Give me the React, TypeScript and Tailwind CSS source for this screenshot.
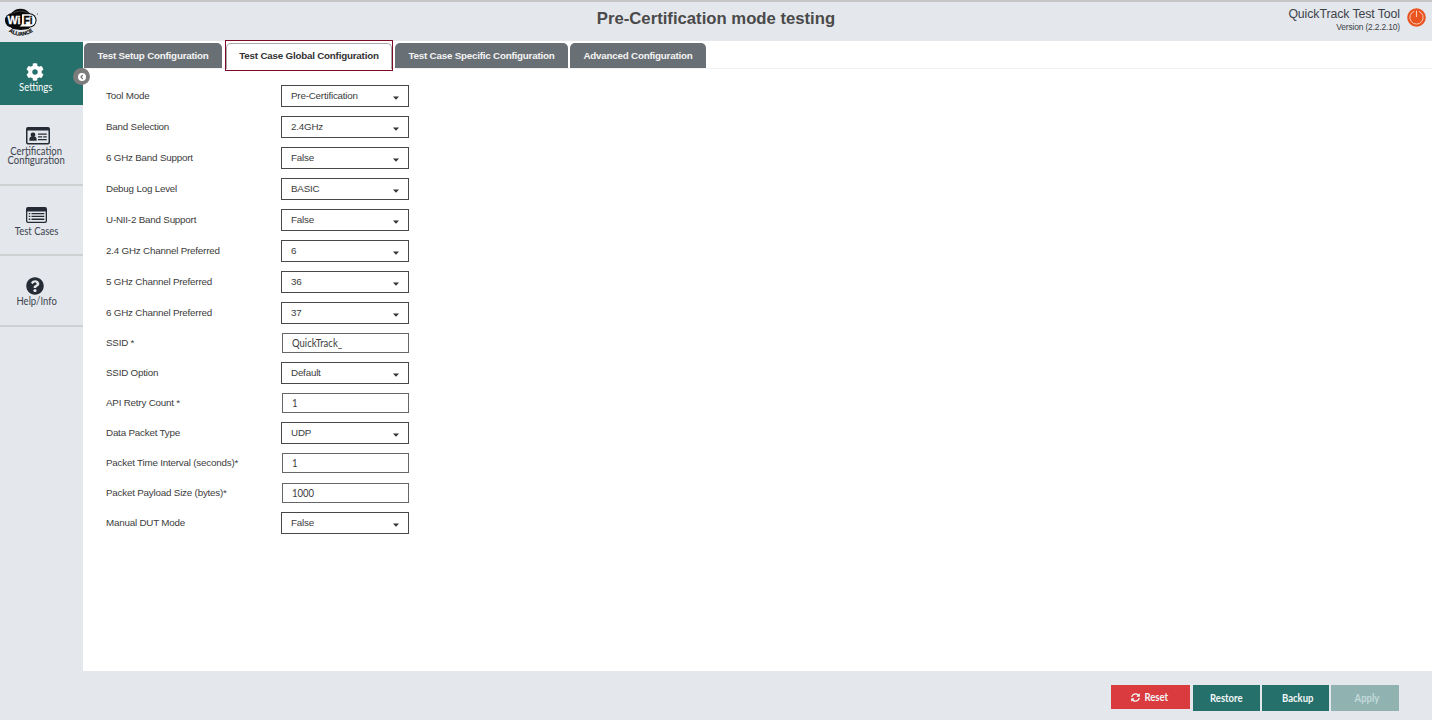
import React from 'react';
import { FaCog, FaQuestionCircle, FaSyncAlt } from 'react-icons/fa';

type Field = { label: string; value: string; kind: 'select' | 'input'; row: string };

const tall = 'h-[31px]';
const short = 'h-[30px]';

const fields: Field[] = [
  { label: 'Tool Mode', value: 'Pre-Certification', kind: 'select', row: tall },
  { label: 'Band Selection', value: '2.4GHz', kind: 'select', row: tall },
  { label: '6 GHz Band Support', value: 'False', kind: 'select', row: tall },
  { label: 'Debug Log Level', value: 'BASIC', kind: 'select', row: tall },
  { label: 'U-NII-2 Band Support', value: 'False', kind: 'select', row: tall },
  { label: '2.4 GHz Channel Preferred', value: '6', kind: 'select', row: tall },
  { label: '5 GHz Channel Preferred', value: '36', kind: 'select', row: tall },
  { label: '6 GHz Channel Preferred', value: '37', kind: 'select', row: short },
  { label: 'SSID *', value: 'QuickTrack_', kind: 'input', row: short },
  { label: 'SSID Option', value: 'Default', kind: 'select', row: short },
  { label: 'API Retry Count *', value: '1', kind: 'input', row: short },
  { label: 'Data Packet Type', value: 'UDP', kind: 'select', row: short },
  { label: 'Packet Time Interval (seconds)*', value: '1', kind: 'input', row: short },
  { label: 'Packet Payload Size (bytes)*', value: '1000', kind: 'input', row: short },
  { label: 'Manual DUT Mode', value: 'False', kind: 'select', row: short },
];

function WifiLogo() {
  return (
    <svg width="36" height="30" viewBox="0 0 36 30" className="block">
      <circle cx="15.500" cy="12.500" r="11.700" fill="#0b0b0b" />
      <path d="M0 18.500Q15.500 25.500 32 18.500V30H0z" fill="#e4e7ec" />
      <path d="M6 6.500Q15.500-.5 25 6.500" fill="none" stroke="#666" strokeWidth=".6" />
      <rect x="0" y="5.200" width="31.500" height="14.300" rx="7" fill="#0b0b0b" />
      <path d="M17 6.300h7.500a6 6 0 0 1 0 12.100H14.500q2.500-1 2.500-4z" fill="#fff" />
      <text x="2.600" y="16.300" fontSize="11.500" fontWeight="bold" fill="#fff" stroke="#fff" strokeWidth=".3" textLength="13" lengthAdjust="spacingAndGlyphs">Wi</text>
      <text x="18.600" y="16.300" fontSize="11.500" fontWeight="bold" fill="#0b0b0b" stroke="#0b0b0b" strokeWidth=".4" textLength="9" lengthAdjust="spacingAndGlyphs">Fi</text>
      <path id="alliance-curve" d="M3.800 23.500Q15.500 31.800 28 23.500" fill="none" />
      <text fontSize="5.200" fontWeight="bold" fill="#0b0b0b" stroke="#0b0b0b" strokeWidth=".2">
        <textPath href="#alliance-curve" textLength="26" lengthAdjust="spacingAndGlyphs">ALLIANCE</textPath>
      </text>
      <circle cx="32.500" cy="6" r=".7" fill="#777" />
    </svg>
  );
}

function CardIcon() {
  return (
    <svg width="24" height="18" viewBox="0 0 24 18" className="ml-[2px] block">
      <path fillRule="evenodd" d="M2 0h20a2 2 0 0 1 2 2v13.500a2 2 0 0 1-2 2H2a2 2 0 0 1-2-2V2a2 2 0 0 1 2-2zM1.500 3.500v11.700q0 .8.8.8h19.400q.8 0 .8-.8V3.500z" fill="#242b35" />
      <circle cx="7" cy="7.800" r="2.400" fill="#242b35" />
      <path d="M3.300 13.800q0-4.200 2.200-4.200 1.500 1 3 0 2.200 0 2.200 4.200z" fill="#242b35" />
      <path d="M12 7.200h8.700M12 9.900h4.200M17.300 9.900h3.400M12 12.700h8.700" stroke="#242b35" strokeWidth="1.300" />
    </svg>
  );
}

function ListIcon() {
  return (
    <svg width="21" height="16" viewBox="0 0 21 16" className="block">
      <path fillRule="evenodd" d="M2 0h17a2 2 0 0 1 2 2v12a2 2 0 0 1-2 2H2a2 2 0 0 1-2-2V2a2 2 0 0 1 2-2zM1.300 4.500v9.400q0 .8.8.8h16.800q.8 0 .8-.8V4.500z" fill="#242b35" />
      <path d="M2.800 6.600h1.500M2.800 9.400h1.500M2.800 12.200h1.500M5.500 6.600h12.800M5.500 9.400h12.800M5.500 12.200h12.800" stroke="#242b35" strokeWidth="1.400" />
    </svg>
  );
}

function PowerIcon() {
  return (
    <svg width="19" height="19" viewBox="0 0 19 19" className="block">
      <circle cx="9.500" cy="9.500" r="9.300" fill="#e95420" />
      <path d="M7.200 3.300a6.600 6.600 0 1 0 4.600 0" fill="none" stroke="#f9c9b5" strokeWidth="1" />
      <path d="M9.500 2.500v6.500" stroke="#f9c9b5" strokeWidth="1.100" />
    </svg>
  );
}

function FieldRow({ label, value, kind, row }: Field) {
  return (
    <div className={`flex items-start ${row}`}>
      <div className="w-[175px] pt-[7px] leading-4 whitespace-nowrap">{label}</div>
      {kind === 'select' ? (
        <div className="mt-1 flex h-[22px] w-[128px] items-start justify-between border border-[#484848] pl-[9px] pr-[9px] pt-[2px] leading-4">
          <span>{value}</span>
          <svg width="6" height="4" viewBox="0 0 6 4" className="mt-[8px]">
            <path d="M0 .5h6L3 3.700z" fill="#333" />
          </svg>
        </div>
      ) : (
        <div className="ml-px mt-[5px] flex h-5 w-[127px] items-center border border-[#666] pl-[9px] font-['Lato',sans-serif] text-[10.700px] leading-4 tracking-normal">
          <span className="origin-left scale-x-[.89]">{value}</span>
        </div>
      )}
    </div>
  );
}

export default function App() {
  return (
    <div className="flex h-[720px] w-[1432px] flex-col overflow-hidden border-t-2 border-[#c6c6c6] bg-[#e4e7ec] font-['Liberation_Sans',sans-serif] text-[#3c3c3c]">
      <header className="grid h-[39px] shrink-0 grid-cols-[1fr_auto_1fr]">
        <div className="pl-[5px] pt-[6px]">
          <WifiLogo />
        </div>
        <h1 className="pt-[7px] text-[16.700px] leading-5 font-bold text-[#4a4a4a]">Pre-Certification mode testing</h1>
        <div className="flex justify-end gap-[7px] pr-[6px] pt-[6px]">
          <div className="text-right text-[#3d4249]">
            <div className="text-[12.300px] leading-[13px] tracking-[-0.080px]">QuickTrack Test Tool</div>
            <div className="text-[8.400px] leading-[13px] tracking-[-0.130px]">Version (2.2.2.10)</div>
          </div>
          <PowerIcon />
        </div>
      </header>

      <div className="flex min-h-0 flex-1">
        <nav className="relative w-[83px] shrink-0 pt-px font-['Lato',sans-serif] text-[10.700px] leading-[9px] text-[#3d444e]">
          <div className="flex h-[63px] flex-col items-center bg-[#26706c] pr-[11px] pt-[21px] text-white">
            <FaCog size={18} className="mr-[2px]" />
            <span className="mt-px scale-x-[.89]">Settings</span>
          </div>
          <div className="flex h-[81px] flex-col items-center border-b-2 border-[#cfd0d2] pr-[10px] pt-[22px] text-center">
            <CardIcon />
            <span className="mt-px scale-x-[.89]">Certification</span>
            <span className="scale-x-[.89]">Configuration</span>
          </div>
          <div className="flex h-[70px] flex-col items-center border-b-2 border-[#cfd0d2] pr-[10px] pt-[21px]">
            <ListIcon />
            <span className="mt-[3px] scale-x-[.89]">Test Cases</span>
          </div>
          <div className="flex h-[71px] flex-col items-center border-b-2 border-[#cfd0d2] pr-[10px] pt-[21px]">
            <FaQuestionCircle size={18} color="#242b35" className="mr-[3px]" />
            <span className="mt-px scale-x-[.89]">Help/Info</span>
          </div>
          <div className="absolute left-[73px] top-[27px] flex size-[17px] items-center justify-center rounded-full bg-[#7c7c7c]">
            <svg width="8" height="8" viewBox="0 0 8 8">
              <circle cx="4" cy="4" r="4" fill="#fff" />
              <path d="M4.800 2L2.900 4l1.900 2" fill="none" stroke="#777" strokeWidth="1.200" />
            </svg>
          </div>
        </nav>

        <main className="flex min-w-0 flex-1 flex-col">
          <div className="flex min-h-0 flex-1 flex-col bg-white">
            <div className="flex h-7 items-start border-b border-[#f2f2f2] pl-[1px] text-[9.800px] font-bold tracking-[-0.210px] text-[#f4f4f4]">
              <div className="mt-[2px] flex h-[25px] w-[138px] items-center justify-center rounded-t-[5px] bg-[#697075] pt-px">Test Setup Configuration</div>
              <div className="z-10 ml-[3px] mt-[-1px] h-[31px] w-[168px] shrink-0 border border-[#7d0a26] bg-white text-[#333]">
                <div className="mt-[2px] flex h-[26px] items-center justify-center rounded-t-[5px] border border-b-0 border-[#aaa]">Test Case Global Configuration</div>
              </div>
              <div className="ml-[2px] mt-[2px] flex h-[25px] w-[173px] items-center justify-center rounded-t-[5px] bg-[#697075] pt-px">Test Case Specific Configuration</div>
              <div className="ml-[2px] mt-[2px] flex h-[25px] w-[136px] items-center justify-center rounded-t-[5px] bg-[#697075] pt-px">Advanced Configuration</div>
            </div>
            <form className="pl-[23px] pt-3 text-[9.800px] tracking-[-0.200px]">
              {fields.map((f) => (
                <FieldRow key={f.label} {...f} />
              ))}
            </form>
          </div>
          <footer className="flex h-[49px] shrink-0 items-start justify-end gap-[2px] pr-[33px] pt-[14px] font-['Lato',sans-serif] text-[10.700px] font-bold text-[#f3f6f6]">
            <button className="flex h-6 w-[79px] items-center justify-center gap-[3px] bg-[#d93b3f]">
              <FaSyncAlt size={9} />
              <span className="scale-x-[.89]">Reset</span>
            </button>
            <button className="ml-px h-[26px] w-[67px] bg-[#26706c]">
              <span className="inline-block scale-x-[.89]">Restore</span>
            </button>
            <button className="h-[26px] w-[67px] bg-[#26706c] pl-1">
              <span className="inline-block scale-x-[.89]">Backup</span>
            </button>
            <button className="h-[26px] w-[68px] bg-[#90b3b2] pl-1 text-[#c3dad9]">
              <span className="inline-block scale-x-[.89]">Apply</span>
            </button>
          </footer>
        </main>
      </div>
    </div>
  );
}
